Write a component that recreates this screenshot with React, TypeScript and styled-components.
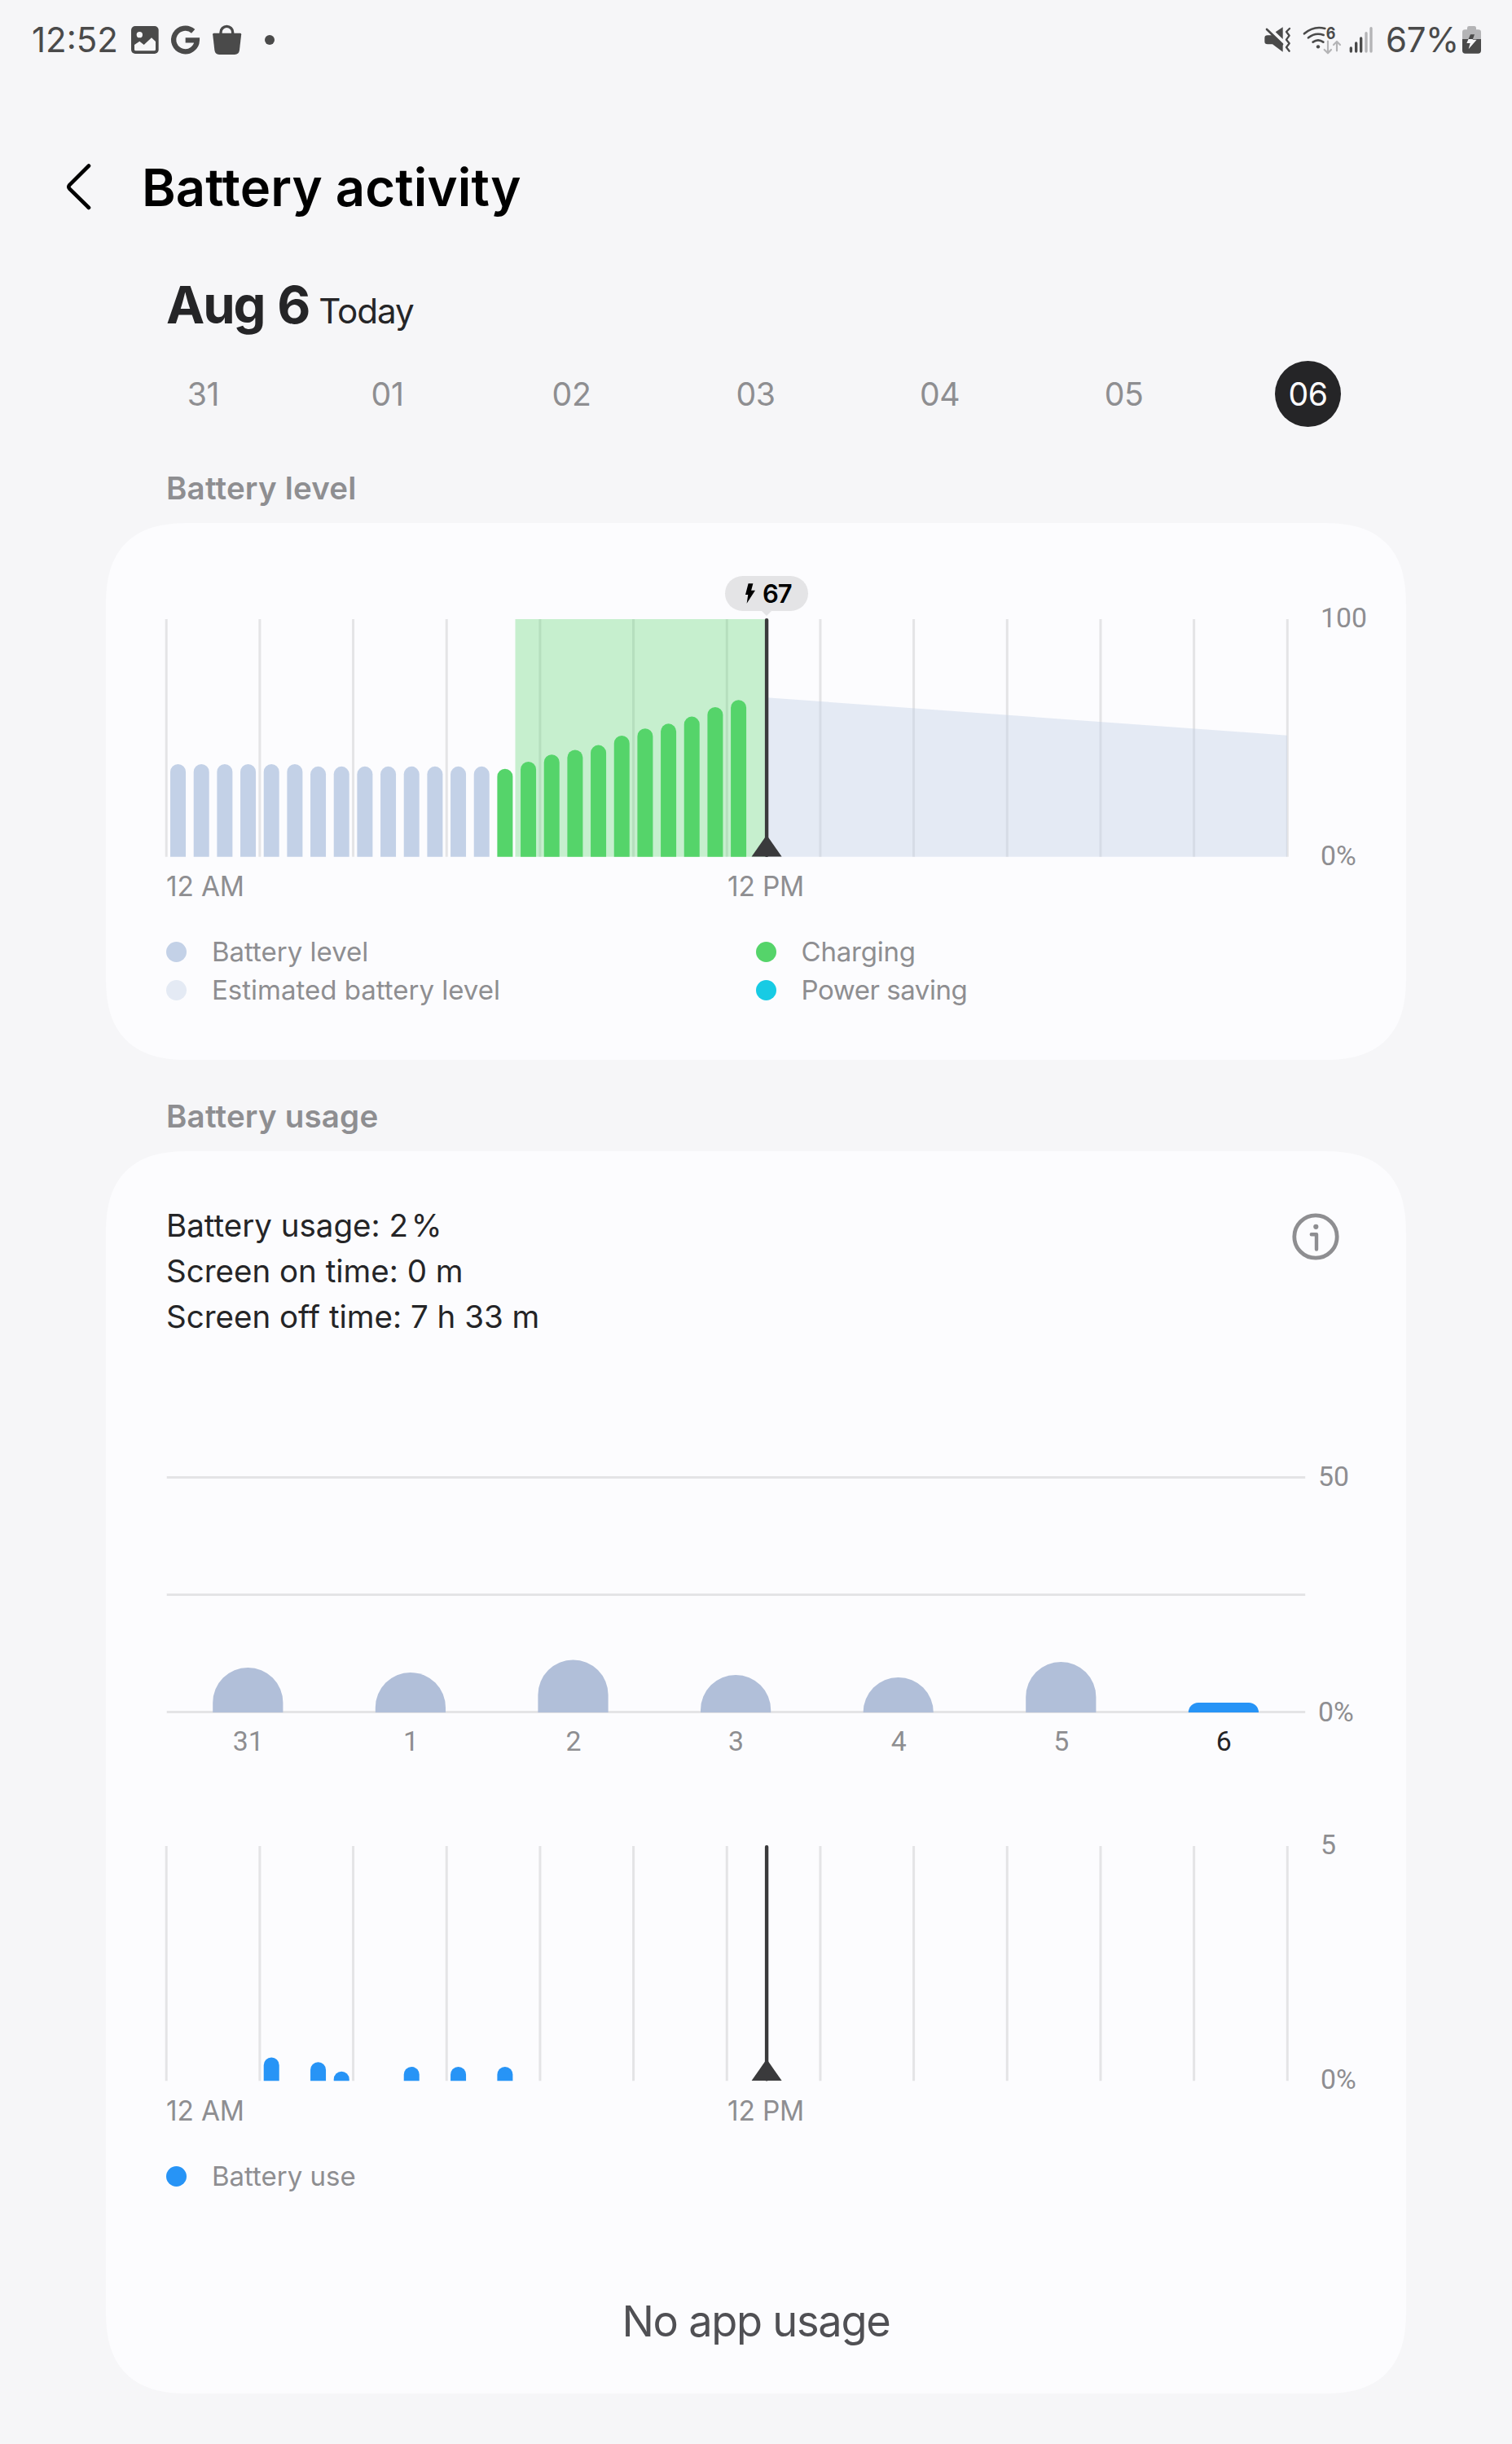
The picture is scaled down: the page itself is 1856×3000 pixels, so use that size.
import React from "react";
import styled, { createGlobalStyle } from "styled-components";

const ink = "#4a4a4a";
const faintInk = "#b4b4b6";
const grey = "#8e8e91";
const pageBg = "#f6f6f8";
const gridLine = "#e4e4e6";
const levelBlue = "#c3d1e7";
const estimateBlue = "#e4eaf4";
const chargeGreen = "#55d46a";
const usageBlue = "#2794f6";

const GlobalStyle = createGlobalStyle`
  *, *::before, *::after { box-sizing: border-box; }
  body {
    margin: 0;
    background: ${pageBg};
    font-family: Inter, "Liberation Sans", sans-serif;
    -webkit-font-smoothing: antialiased;
  }
`;

const Screen = styled.div`
  width: 1856px;
  height: 3000px;
  overflow: hidden;
  background: ${pageBg};
  display: flex;
  flex-direction: column;
`;

const StatusBar = styled.header`
  display: flex;
  align-items: center;
  justify-content: space-between;
  height: 98px;
  padding: 0 37px 0 39px;
  color: ${ink};
`;

const StatusGroup = styled.div`
  display: flex;
  align-items: center;
  height: 98px;
`;

const Clock = styled.span`
  width: 122px;
  font-size: 42px;
  line-height: 98px;
`;

const Percent = styled.span`
  width: 94px;
  font-size: 42px;
  line-height: 98px;
  letter-spacing: -0.4px;
`;

const Glyph = styled.svg<{ $gap?: number }>`
  display: block;
  flex: none;
  margin-right: ${(p) => p.$gap ?? 0}px;
  overflow: visible;
`;

const TitleBar = styled.div`
  display: flex;
  align-items: center;
  height: 100px;
  margin-top: 82px;
  padding-left: 78px;
`;

const BackButton = styled.button`
  width: 96px;
  height: 64px;
  padding: 0;
  border: 0;
  background: none;
  text-align: left;
`;

const Title = styled.h1`
  margin: 0;
  font-size: 63.3px;
  line-height: 100px;
  font-weight: 600;
  letter-spacing: 0.12px;
  color: #000;
`;

const DateHeading = styled.div`
  display: flex;
  align-items: baseline;
  height: 80px;
  margin-top: 54px;
  padding-left: 204px;
  color: #252527;
`;

const DateName = styled.span`
  font-size: 63.3px;
  line-height: 80px;
  font-weight: 700;
  letter-spacing: -2.1px;
  word-spacing: 3px;
`;

const DateNote = styled.span`
  margin-left: 12px;
  font-size: 42.2px;
  letter-spacing: -1.1px;
`;

const DayPicker = styled.nav`
  display: flex;
  justify-content: space-between;
  margin: 29px 210px 0 209px;
`;

const DayChip = styled.button<{ $active: boolean }>`
  width: 81px;
  height: 81px;
  padding: 0;
  border: 0;
  border-radius: 50%;
  background: ${(p) => (p.$active ? "#252527" : "transparent")};
  color: ${(p) => (p.$active ? "#fcfcff" : grey)};
  font-family: inherit;
  font-size: 39.2px;
  line-height: 81px;
  letter-spacing: -0.4px;
`;

const SectionLabel = styled.h2<{ $top: number }>`
  margin: ${(p) => p.$top}px 0 19px;
  padding-left: 204px;
  font-size: 38.5px;
  line-height: 48px;
  font-weight: 600;
  letter-spacing: 0.2px;
  color: ${grey};
`;

const Card = styled.section<{ $height: number; $top: number }>`
  height: ${(p) => p.$height}px;
  margin: 0 130px;
  padding: ${(p) => p.$top}px 74px 0;
  border-radius: 84px;
  background: #fcfcfe;

  @supports (corner-shape: superellipse(1.36)) {
    border-radius: 104px;
    corner-shape: superellipse(1.36);
  }
`;

const ChartRow = styled.div<{ $top?: number }>`
  display: flex;
  margin-top: ${(p) => p.$top ?? 0}px;
`;

const Plot = styled.div<{ $width: number; $height: number }>`
  position: relative;
  flex: none;
  width: ${(p) => p.$width}px;
  height: ${(p) => p.$height}px;
`;

const Drawing = styled.svg`
  display: block;
  overflow: visible;
`;

const Axis = styled.div<{ $gap: number; $rise?: number }>`
  display: flex;
  flex-direction: column;
  justify-content: space-between;
  margin: -${(p) => p.$rise ?? 21}px 0 -19px ${(p) => p.$gap}px;
  font-family: Roboto, "Liberation Sans", sans-serif;
  font-size: 33.8px;
  line-height: 40px;
  color: ${grey};
`;

const HourLabels = styled.div<{ $top: number }>`
  display: grid;
  grid-template-columns: 689px 1fr;
  margin-top: ${(p) => p.$top}px;
  font-size: 33.4px;
  line-height: 40px;
  letter-spacing: -0.15px;
  color: ${grey};
`;

const DayLabels = styled.div`
  display: grid;
  grid-template-columns: repeat(7, 199.6px);
  margin-top: 15px;
  padding-left: 1px;
  font-family: Roboto, "Liberation Sans", sans-serif;
  font-size: 33.8px;
  line-height: 40px;
  text-align: center;
`;

const DayLabel = styled.span<{ $active: boolean }>`
  color: ${(p) => (p.$active ? "#252527" : grey)};
`;

const Legend = styled.div`
  display: grid;
  grid-template-columns: 723.5px 1fr;
  margin-top: 37px;
`;

const LegendItem = styled.div<{ $track?: number }>`
  display: flex;
  align-items: center;
  gap: 31px;
  font-size: 33px;
  line-height: 47px;
  letter-spacing: ${(p) => p.$track ?? 0}px;
  color: ${grey};
`;

const Swatch = styled.span<{ $color: string }>`
  width: 25px;
  height: 25px;
  border-radius: 50%;
  background: ${(p) => p.$color};
`;

const LevelTag = styled.div`
  position: absolute;
  left: 686px;
  top: -53px;
  display: flex;
  align-items: center;
  gap: 9px;
  width: 102px;
  height: 43px;
  padding-left: 25px;
  border-radius: 22px;
  background: ${gridLine};
  color: #000;
  font-size: 31px;
  line-height: 43px;
  font-weight: 600;
  letter-spacing: -1.2px;

  &::after {
    content: "";
    position: absolute;
    left: 44px;
    top: 42px;
    border: 7px solid transparent;
    border-top-color: ${gridLine};
    border-bottom: 0;
  }
`;

const UsageHead = styled.div`
  display: flex;
  justify-content: space-between;
  align-items: flex-start;
  padding-right: 8px;
`;

const UsageFacts = styled.div`
  font-size: 38.5px;
  line-height: 56px;
  color: #252527;
`;

const Fact = styled.p`
  margin: 0;
`;

const SpacedDigit = styled.span`
  letter-spacing: 4px;
`;

const InfoGlyph = styled(Glyph)`
  margin-top: 13px;
`;

const EmptyNote = styled.p`
  margin: 122px 0 0;
  text-align: center;
  font-size: 52.3px;
  line-height: 64px;
  letter-spacing: -1.25px;
  color: #505054;
`;

const SLOT = 1376.1 / 48;

function topRounded(x: number, w: number, top: number, bottom: number, r: number) {
  return `M${x} ${bottom}V${top + r}A${r} ${r} 0 0 1 ${x + r} ${top}H${x + w - r}A${r} ${r} 0 0 1 ${x + w} ${top + r}V${bottom}Z`;
}

function HourGrid({ height }: { height: number }) {
  return (
    <g fill={gridLine}>
      {Array.from({ length: 13 }, (_, i) => (
        <rect key={i} x={SLOT * 4 * i - 1.3} y={0} width={3} height={height} />
      ))}
    </g>
  );
}

function NowMarker({ height }: { height: number }) {
  return (
    <g fill="#3a3a3c">
      <rect x={734.9} y={-1} width={4.4} height={height + 1} rx={2} />
      <path d={`M737.1 ${height - 27}L755.6 ${height - 0.5}H718.6Z`} />
    </g>
  );
}

function HourBars({ data, scale, height }: { data: [number, number, string][]; scale: number; height: number }) {
  return (
    <>
      {data.map(([slot, value, color]) => {
        const h = value * scale;
        return (
          <path
            key={slot}
            fill={color}
            d={topRounded(slot * SLOT + SLOT / 2 - 9.3, 19, height - h, height, 9.5)}
          />
        );
      })}
    </>
  );
}

const levels = [39, 39, 39, 39, 39, 39, 38, 38, 38, 38, 38, 38, 38, 38, 37, 40, 43, 45, 47, 51, 54, 56, 59, 63, 66];
const levelBars = levels.map((v, i): [number, number, string] => [i, v, i < 14 ? levelBlue : chargeGreen]);

const useBars: [number, number, string][] = [
  [4, 0.5, usageBlue],
  [6, 0.4, usageBlue],
  [7, 0.2, usageBlue],
  [10, 0.3, usageBlue],
  [12, 0.3, usageBlue],
  [14, 0.3, usageBlue],
];

const week = [
  { day: "31", h: 55 },
  { day: "1", h: 49 },
  { day: "2", h: 64.5 },
  { day: "3", h: 46 },
  { day: "4", h: 43 },
  { day: "5", h: 62 },
  { day: "6", h: 12 },
];

function weekBar(i: number, h: number) {
  const x = 57.2 + i * 199.6;
  const w = 86.2;
  const r = Math.min(w / 2, h);
  return topRounded(x, w, 290 - h, 290, r);
}

function LeftStatus() {
  return (
    <StatusGroup>
      <Clock>12:52</Clock>
      <Glyph $gap={15} width={34} height={34} viewBox="484 96 102 102">
        <rect x="484" y="96" width="101" height="102" rx="15" fill={ink} />
        <circle cx="515" cy="128" r="11" fill={pageBg} />
        <path d="M496 165L515 152L531 165L559 139L574 153V182Q574 187 569 187H501Q496 187 496 182Z" fill={pageBg} />
      </Glyph>
      <Glyph $gap={16} width={35} height={36} viewBox="631 93 105 108">
        <path d="M712.5 115A43 43 0 1 0 726.5 148H684" fill="none" stroke={ink} strokeWidth="19" />
      </Glyph>
      <Glyph $gap={29} width={35} height={36} viewBox="782 93 105 108">
        <path
          d="M786 122H884Q888 122 887.5 127L881 184Q879 201 863 201H806Q791 201 789 184L782.5 127Q782 122 786 122Z"
          fill={ink}
        />
        <path d="M812 124V119A22 22 0 0 1 856 119V124" fill="none" stroke={ink} strokeWidth="10" />
      </Glyph>
      <Glyph width={12} height={12} viewBox="0 0 12 12">
        <circle cx="6" cy="6" r="6" fill={ink} />
      </Glyph>
    </StatusGroup>
  );
}

const bolt = "M915 126H930L923 145H938L908 180L914 158H901Z";

function RightStatus() {
  return (
    <StatusGroup>
      <Glyph $gap={16} width={32} height={32} viewBox="156 99 96 96">
        <path d="M168 130H190L224 162V191L186 163H168Q157 163 157 153V140Q157 130 168 130Z" fill={ink} />
        <path d="M165 108L222 163" stroke={ink} strokeWidth="8" strokeLinecap="round" />
        <path d="M197 118L224 100V144Z" fill={ink} />
        <path
          d="M249 105L237 117L248 131L237 146L248 160L237 174L248 188"
          fill="none"
          stroke={ink}
          strokeWidth="7"
          strokeLinecap="round"
          strokeLinejoin="round"
        />
      </Glyph>
      <Glyph $gap={9} width={47} height={34} viewBox="300 97 141 102">
        <g fill="none" stroke={ink} strokeWidth="8" strokeLinecap="round">
          <path d="M303 125Q338 95 379 106" />
          <path d="M318 140Q344 119 374 130" />
          <path d="M335 156Q354 142 373 156" />
        </g>
        <circle cx="354" cy="173" r="6.5" fill={ink} />
        <text x="383" y="144" fontSize="60" fontWeight="700" fill={ink} textLength="35" lengthAdjust="spacingAndGlyphs">
          6
        </text>
        <g fill="none" stroke={faintInk} strokeWidth="6.5" strokeLinecap="round" strokeLinejoin="round">
          <path d="M390 153V196M377 184L390 197L402 184" />
          <path d="M423 188V155M411 166L423 154L435 166" />
        </g>
      </Glyph>
      <Glyph $gap={14} width={31} height={32} viewBox="469 99 93 96">
        <g strokeWidth="10" strokeLinecap="round">
          <path d="M476 177V189M495 159V189M513 141V189" stroke={ink} />
          <path d="M532 122V189M550 104V189" stroke={faintInk} />
        </g>
      </Glyph>
      <Percent>67%</Percent>
      <Glyph width={24} height={34} viewBox="885 95 72 102">
        <clipPath id="upper">
          <rect x="880" y="90" width="80" height="53" />
        </clipPath>
        <clipPath id="lower">
          <rect x="880" y="143" width="80" height="60" />
        </clipPath>
        <g clipPath="url(#upper)">
          <path
            d="M903 108V102Q903 95 910 95H929Q936 95 936 102V108H944Q954 108 954 118V197H885V118Q885 108 895 108Z"
            fill={faintInk}
          />
          <path d={bolt} fill={ink} />
        </g>
        <g clipPath="url(#lower)">
          <path d="M885 120H954V185Q954 196 943 196H896Q885 196 885 185Z" fill={ink} />
          <path d={bolt} fill={pageBg} />
        </g>
      </Glyph>
    </StatusGroup>
  );
}

export default function App() {
  return (
    <Screen>
      <GlobalStyle />
      <StatusBar>
        <LeftStatus />
        <RightStatus />
      </StatusBar>

      <TitleBar>
        <BackButton aria-label="Back">
          <Glyph width={40} height={64} viewBox="78 198 40 64">
            <path
              d="M109 203.5L85.3 227Q83.4 229.3 85.3 231.6L109 255"
              fill="none"
              stroke="#000"
              strokeWidth="4.6"
              strokeLinecap="round"
            />
          </Glyph>
        </BackButton>
        <Title>Battery activity</Title>
      </TitleBar>

      <DateHeading>
        <DateName>Aug 6</DateName>
        <DateNote>Today</DateNote>
      </DateHeading>

      <DayPicker>
        {["31", "01", "02", "03", "04", "05", "06"].map((d) => (
          <DayChip key={d} $active={d === "06"}>
            {d}
          </DayChip>
        ))}
      </DayPicker>

      <SectionLabel $top={51}>Battery level</SectionLabel>
      <Card $height={659} $top={118}>
        <ChartRow>
          <Plot $width={1398} $height={292}>
            <Drawing width={1398} height={292}>
              <HourGrid height={291.7} />
              <rect x={428.5} y={0} width={308.6} height={291.7} fill={chargeGreen} opacity={0.325} />
              <path d="M737.1 96.2L1376 142.7V291.7H737.1Z" fill={levelBlue} opacity={0.41} />
              <HourBars data={levelBars} scale={2.917} height={291.7} />
              <NowMarker height={292} />
            </Drawing>
            <LevelTag>
              <Glyph width={12} height={25} viewBox="882 107 37 75">
                <path d="M893 107H911L904 133H919L887 182L892 149H882Z" fill="#000" />
              </Glyph>
              67
            </LevelTag>
          </Plot>
          <Axis $gap={19}>
            <span>100</span>
            <span>0%</span>
          </Axis>
        </ChartRow>
        <HourLabels $top={16}>
          <span>12 AM</span>
          <span>12 PM</span>
        </HourLabels>
        <Legend>
          <LegendItem>
            <Swatch $color={levelBlue} />
            Battery level
          </LegendItem>
          <LegendItem $track={-0.2}>
            <Swatch $color={chargeGreen} />
            Charging
          </LegendItem>
          <LegendItem>
            <Swatch $color={estimateBlue} />
            Estimated battery level
          </LegendItem>
          <LegendItem $track={-0.45}>
            <Swatch $color="#17cbe4" />
            Power saving
          </LegendItem>
        </Legend>
      </Card>

      <SectionLabel $top={45}>Battery usage</SectionLabel>
      <Card $height={1525} $top={63}>
        <UsageHead>
          <UsageFacts>
            <Fact>
              Battery usage: <SpacedDigit>2</SpacedDigit>%
            </Fact>
            <Fact>Screen on time: 0 m</Fact>
            <Fact>Screen off time: 7 h 33 m</Fact>
          </UsageFacts>
          <InfoGlyph width={58} height={58} viewBox="0 0 58 58">
            <circle cx="29" cy="29" r="26.2" fill="none" stroke={grey} strokeWidth="4.8" />
            <circle cx="29.3" cy="16.8" r="3.1" fill={grey} />
            <path
              d="M23.8 26.2H30V44.5"
              fill="none"
              stroke={grey}
              strokeWidth="4.4"
              strokeLinecap="round"
              strokeLinejoin="round"
            />
          </InfoGlyph>
        </UsageHead>

        <ChartRow $top={168}>
          <Plot $width={1398} $height={291}>
            <Drawing width={1398} height={291}>
              <g fill={gridLine}>
                <rect x={0.7} y={0} width={1397.5} height={3} />
                <rect x={0.7} y={144} width={1397.5} height={3} />
                <rect x={0.7} y={288} width={1397.5} height={3} />
              </g>
              {week.map((d, i) => (
                <path key={d.day} d={weekBar(i, d.h)} fill={d.day === "6" ? usageBlue : "#b1bfd9"} />
              ))}
            </Drawing>
          </Plot>
          <Axis $gap={16} $rise={19}>
            <span>50</span>
            <span>0%</span>
          </Axis>
        </ChartRow>
        <DayLabels>
          {week.map((d) => (
            <DayLabel key={d.day} $active={d.day === "6"}>
              {d.day}
            </DayLabel>
          ))}
        </DayLabels>

        <ChartRow $top={108}>
          <Plot $width={1398} $height={288}>
            <Drawing width={1398} height={288}>
              <HourGrid height={288.3} />
              <HourBars data={useBars} scale={57.7} height={288.3} />
              <NowMarker height={288.6} />
            </Drawing>
          </Plot>
          <Axis $gap={19}>
            <span>5</span>
            <span>0%</span>
          </Axis>
        </ChartRow>
        <HourLabels $top={17}>
          <span>12 AM</span>
          <span>12 PM</span>
        </HourLabels>
        <Legend>
          <LegendItem>
            <Swatch $color={usageBlue} />
            Battery use
          </LegendItem>
        </Legend>

        <EmptyNote>No app usage</EmptyNote>
      </Card>
    </Screen>
  );
}
